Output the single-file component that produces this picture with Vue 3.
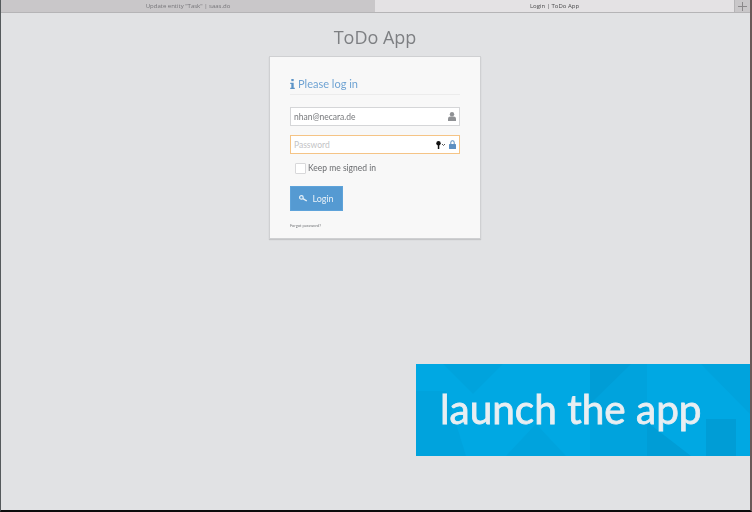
<script setup>
const tabs = [
  { label: 'Update entity "Task" | saas.do', active: false },
  { label: 'Login | ToDo App', active: true }
]
const triangles = [
  '27,0 87,0 57,30', '0,27 30,27 50,92 0,92', '174,0 231,0 231,92 174,92', '120,60 150,92 90,92',
  '285,0 334,0 334,50'
]
const darker = ['231,58 275,92 231,92', '174,0 215,0 174,40', '290,55 320,55 320,92 290,92']
</script>

<template>
  <div class="screen">
    <nav class="tabs">
      <div v-for="tab in tabs" :key="tab.label" class="tab" :class="{ active: tab.active }">{{ tab.label }}</div>
      <div class="new-tab">
        <svg width="9" height="9" viewBox="0 0 9 9"><path d="M4.500 0v9M0 4.500h9" stroke="#8a888a" stroke-width="1" /></svg>
      </div>
    </nav>

    <main class="page">
      <h1 class="title">ToDo App</h1>
      <section class="card">
        <h2 class="heading">
          <svg width="5" height="10" viewBox="0 0 5 11" fill="#5b93c7"><rect x="1.200" y="0" width="2.600" height="2.400" /><path d="M0 4h3.800v5.600H5V11H0V9.600h1.200V5.400H0z" /></svg>
          Please log in
        </h2>
        <div class="field">
          <span class="value">nhan@necara.de</span>
          <svg class="end-icon" width="8" height="9" viewBox="0 0 8 9" fill="#8f9194"><circle cx="4" cy="2.300" r="2.200" /><path d="M0 9V7c0-1.600 1.200-2.400 2.400-2.400h3.200C6.800 4.600 8 5.400 8 7v2z" /></svg>
        </div>
        <div class="field focused">
          <span class="placeholder">Password</span>
          <svg class="key-icon" width="10" height="8" viewBox="0 0 10 8"><circle cx="2.500" cy="2.200" r="2.200" fill="#111" /><rect x="1.800" y="3" width="1.500" height="5" fill="#111" /><path d="M6 3l1.500 1.500L9 3" fill="none" stroke="#555" stroke-width="1" /></svg>
          <svg class="end-icon" width="7" height="9" viewBox="0 0 7 9" fill="#5c8fc2"><path d="M1.300 4V2.500a2.200 2.200 0 0 1 4.400 0V4h-1V2.500a1.200 1.200 0 0 0-2.400 0V4z" /><rect x="0" y="4" width="7" height="5" rx=".6" /></svg>
        </div>
        <label class="remember">
          <span class="box"></span>
          Keep me signed in
        </label>
        <button class="login" type="button">
          <svg width="9" height="7" viewBox="0 0 9 7" fill="none" stroke="#e8f1f8"><circle cx="2.400" cy="2.400" r="1.800" stroke-width="1.200" /><path d="M4 3.600l3.800 2.400" stroke-width="1.400" /></svg>
          Login
        </button>
        <a class="forgot">Forgot password?</a>
      </section>
    </main>

    <aside class="banner">
      <svg class="pattern" viewBox="0 0 334 92" preserveAspectRatio="none">
        <polygon v-for="p in triangles" :key="p" :points="p" fill="#00a3dd" />
        <polygon v-for="p in darker" :key="p" :points="p" fill="#009dd6" />
      </svg>
      <span class="banner-text">launch the app</span>
    </aside>
  </div>
</template>

<style scoped>
.screen {
  position: relative;
  width: 752px;
  height: 512px;
  box-sizing: border-box;
  display: flex;
  flex-direction: column;
  background: #e1e2e4;
  border-left: 1px solid #555a5c;
  border-right: 2px solid #6b5a58;
  border-bottom: 2px solid #0c0c0c;
  overflow: hidden;
  font-family: "Open Sans", sans-serif;
}
.tabs {
  display: flex;
  height: 13px;
  flex: none;
  box-sizing: border-box;
  border-bottom: 1px solid #b5b4b6;
  background: #c9c7c9;
  filter: blur(0.35px);
}
.tab {
  flex: 0 0 374px;
  text-align: center;
  font-size: 6px;
  line-height: 12px;
  color: #77767a;
}
.tab.active {
  flex: 0 0 359px;
  background: #e4e2e4;
  color: #4a4a4c;
}
.new-tab {
  flex: 1;
  display: flex;
  align-items: center;
  justify-content: center;
  border-left: 1px solid #b5b4b6;
}
.page {
  flex: 1;
  display: flex;
  flex-direction: column;
  align-items: center;
  padding-right: 1px;
  filter: blur(0.35px);
}
.title {
  margin: 11px 0 0;
  height: 32px;
  font-size: 18px;
  line-height: 26px;
  font-weight: 400;
  color: #7d7f82;
}
.card {
  width: 212px;
  height: 183px;
  box-sizing: border-box;
  padding: 0 20px;
  background: #f8f8f8;
  border: 1px solid #cfd0d2;
  box-shadow: 0 1px 1px rgba(0, 0, 0, 0.12);
  display: flex;
  flex-direction: column;
  align-items: flex-start;
  font-family: Lato, sans-serif;
}
.heading {
  align-self: stretch;
  margin: 19px 0 12px;
  height: 19px;
  box-sizing: border-box;
  display: flex;
  align-items: center;
  gap: 3px;
  font-size: 11px;
  font-weight: 400;
  line-height: 16px;
  padding-bottom: 3px;
  color: #6fa3d3;
  border-bottom: 1px solid #ececec;
}
.field {
  align-self: stretch;
  height: 19px;
  box-sizing: border-box;
  margin-bottom: 9px;
  padding: 0 3px 0 3px;
  display: flex;
  align-items: center;
  background: #fff;
  border: 1px solid #d5d6d8;
  font-size: 8.500px;
  color: #77797c;
}
.field.focused {
  border-color: #f5c486;
}
.value, .placeholder {
  flex: 1;
}
.placeholder {
  color: #c2c3c5;
}
.key-icon {
  margin-right: 3px;
}
.remember {
  margin: -1px 0 0 5px;
  display: flex;
  align-items: center;
  gap: 2px;
  height: 12px;
  font-size: 8.500px;
  color: #6a6c6f;
}
.box {
  width: 9px;
  height: 9px;
  background: #fff;
  border: 1px solid #d8d8da;
  border-radius: 1px;
}
.login {
  margin-top: 12px;
  width: 53px;
  height: 25px;
  padding: 0;
  display: flex;
  align-items: center;
  justify-content: center;
  gap: 4px;
  background: #559ad2;
  border: 1px solid #5ea3da;
  color: #e8f1f8;
  font-family: inherit;
  font-size: 9px;
}
.forgot {
  margin-top: 11px;
  font-size: 4px;
  line-height: 8px;
  color: #77797c;
}
.banner {
  position: absolute;
  left: 415px;
  top: 364px;
  width: 334px;
  height: 92px;
  display: flex;
  align-items: center;
  background: #00a8e3;
  filter: blur(0.35px);
}
.pattern {
  position: absolute;
  inset: 0;
  width: 100%;
  height: 100%;
}
.banner-text {
  position: relative;
  margin: 0 0 4px 24px;
  font-family: Lato, sans-serif;
  font-size: 40.500px;
  font-weight: 400;
  color: #e8eef2;
  -webkit-text-stroke: 0.8px #e8eef2;
}
</style>
